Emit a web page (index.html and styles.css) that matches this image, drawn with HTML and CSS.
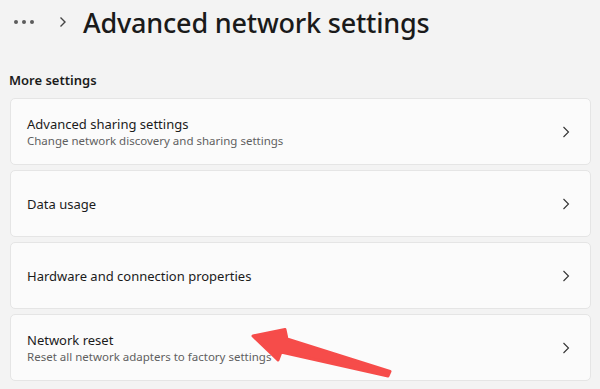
FILE: index.html
```html
<!DOCTYPE html>
<html lang="en">
<head>
    <meta charset="UTF-8">
    <meta name="viewport" content="width=device-width, initial-scale=1.0">
    <title>Advanced network settings</title>
    <link rel="stylesheet" href="styles.css">
</head>
<body>
    <div class="encabezado">
        <span class="puntos">
            <svg width="22" height="6" viewBox="0 0 22 6"><circle cx="3" cy="3" r="2"/><circle cx="11" cy="3" r="2"/><circle cx="19" cy="3" r="2"/></svg>
        </span>
        <span class="migas">
            <svg width="8" height="12" viewBox="0 0 8 12"><path d="M1.5 1.5 L6 6 L1.5 10.5" fill="none" stroke="#444" stroke-width="1.4"/></svg>
        </span>
        <h1 class="titulo">Advanced network settings</h1>
    </div>

    <div class="seccion">More settings</div>

    <div class="lista">
        <div class="tarjeta">
            <div class="textos">
                <div class="nombre">Advanced sharing settings</div>
                <div class="detalle">Change network discovery and sharing settings</div>
            </div>
            <svg class="flecha" width="8" height="12" viewBox="0 0 8 12"><path d="M1.5 1 L6.5 6 L1.5 11" fill="none" stroke="#333" stroke-width="1.1"/></svg>
        </div>
        <div class="tarjeta">
            <div class="textos">
                <div class="nombre">Data usage</div>
            </div>
            <svg class="flecha" width="8" height="12" viewBox="0 0 8 12"><path d="M1.5 1 L6.5 6 L1.5 11" fill="none" stroke="#333" stroke-width="1.1"/></svg>
        </div>
        <div class="tarjeta">
            <div class="textos">
                <div class="nombre">Hardware and connection properties</div>
            </div>
            <svg class="flecha" width="8" height="12" viewBox="0 0 8 12"><path d="M1.5 1 L6.5 6 L1.5 11" fill="none" stroke="#333" stroke-width="1.1"/></svg>
        </div>
        <div class="tarjeta">
            <div class="textos">
                <div class="nombre">Network reset</div>
                <div class="detalle">Reset all network adapters to factory settings</div>
            </div>
            <svg class="flecha" width="8" height="12" viewBox="0 0 8 12"><path d="M1.5 1 L6.5 6 L1.5 11" fill="none" stroke="#333" stroke-width="1.1"/></svg>
        </div>
    </div>

    <!-- flecha roja de anotacion -->
    <svg class="anotacion" width="600" height="389" viewBox="0 0 600 389">
        <polygon points="253,336 285,329.5 287,339 390,371.5 388,376 281,352 278,360" fill="#f64c4a" stroke="#f64c4a" stroke-width="3" stroke-linejoin="round"/>
    </svg>
</body>
</html>
```

FILE: styles.css
```css
body {
    margin: 0;
    padding: 0 9px 0 10px;
    background-color: #f3f3f3;
    font-family: "Noto Sans", "Open Sans", sans-serif;
    color: #1b1b1b;
    width: 600px;
    height: 389px;
    box-sizing: border-box;
    overflow: hidden;
    position: relative;
}

.encabezado {
    display: flex;
    align-items: center;
    height: 44px;
}

.puntos {
    display: flex;
    margin-left: 3px;
    fill: #5c5c5c;
}

.migas {
    display: flex;
    margin-left: 24px;
}

.titulo {
    margin: 0 0 0 16px;
    font-size: 27px;
    font-weight: 500;
    color: #1a1a1a;
    letter-spacing: -0.2px;
}

.seccion {
    margin: 27px 0 9px -1px;
    font-size: 13px;
    font-weight: 600;
    color: #1b1b1b;
}

.lista {
    display: flex;
    flex-direction: column;
    gap: 5px;
}

.tarjeta {
    display: flex;
    align-items: center;
    height: 67px;
    box-sizing: border-box;
    padding: 0 20px 0 16px;
    background-color: #fbfbfb;
    border: 1px solid #e5e5e5;
    border-radius: 5px;
}

.textos {
    flex: 1;
}

.nombre {
    font-size: 13px;
    color: #1b1b1b;
    line-height: 18px;
}

.detalle {
    font-size: 11.5px;
    color: #5f5f5f;
    line-height: 16px;
}

.flecha {
    display: block;
}

.anotacion {
    position: absolute;
    top: 0;
    left: 0;
}
```
